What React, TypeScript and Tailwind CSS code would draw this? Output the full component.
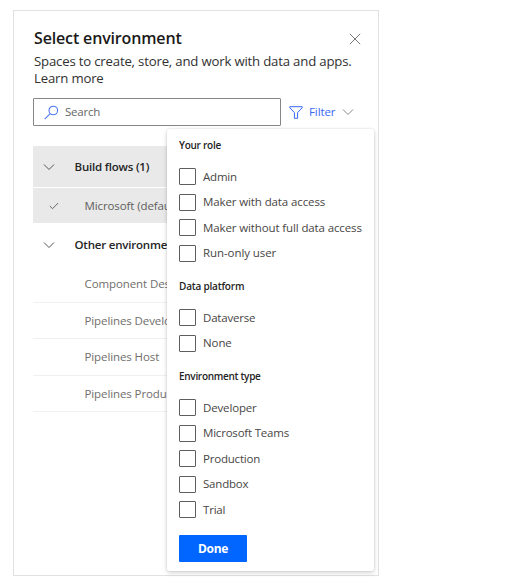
import React from "react";

const groups = [
  {
    title: "Your role",
    titleClass: "tracking-[-0.25px]",
    options: [
      { label: "Admin", cls: "tracking-[-0.2px]" },
      { label: "Maker with data access", cls: "tracking-[-0.11px]" },
      { label: "Maker without full data access", cls: "tracking-[-0.12px]" },
      { label: "Run-only user", cls: "tracking-[-0.08px]" },
    ],
  },
  {
    title: "Data platform",
    titleClass: "tracking-[-0.2px]",
    options: [
      { label: "Dataverse", cls: "tracking-[-0.2px]" },
      { label: "None", cls: "tracking-[-0.1px]" },
    ],
  },
  {
    title: "Environment type",
    titleClass: "tracking-[-0.3px]",
    options: [
      { label: "Developer", cls: "tracking-[-0.15px]" },
      { label: "Microsoft Teams", cls: "tracking-[-0.2px]" },
      { label: "Production", cls: "tracking-[-0.2px]" },
      { label: "Sandbox", cls: "tracking-[-0.2px]" },
      { label: "Trial", cls: "tracking-[-0.2px]" },
    ],
  },
];

const environments = ["Component Design", "Pipelines Development", "Pipelines Host", "Pipelines Production"];

function Chevron({ color = "#555" }: { color?: string }) {
  return (
    <svg width="12" height="8" viewBox="0 0 12 8" fill="none" stroke={color} className="shrink-0">
      <path d="M1 1.5 6 6.5l5-5" />
    </svg>
  );
}

function FilterMenu() {
  return (
    <div className="absolute left-[153px] top-[118px] h-[442px] w-[207px] rounded-[2px] bg-white px-3 pt-[9px] shadow-[0_2px_5px_rgba(0,0,0,0.16),0_0_2px_rgba(0,0,0,0.15)]">
      {groups.map((g) => (
        <section key={g.title} className="mb-[9px] last-of-type:mb-[8.5px]">
          <h2 className={`mb-[16px] h-[14px] whitespace-nowrap text-[10px] leading-[14px] font-semibold text-[#242424] ${g.titleClass}`}>
            {g.title}
          </h2>
          {g.options.map((o) => (
            <label key={o.label} className="flex h-[25.5px] items-start gap-[7px]">
              <span className="h-[17px] w-[17px] shrink-0 rounded-[1px] border border-[#605e5c] bg-white" />
              <span className={`-mt-[0.3px] whitespace-nowrap text-[11.5px] leading-[17px] text-[#484644] ${o.cls}`}>{o.label}</span>
            </label>
          ))}
        </section>
      ))}
      <button className="block h-[27px] w-[68px] rounded-[1px] bg-[#0066ff] text-[12px] leading-[27px] font-bold tracking-[-0.3px] text-white">
        Done
      </button>
    </div>
  );
}

export default function App() {
  return (
    <div className="h-[588px] w-[513px] overflow-hidden bg-white pl-[13px] pt-[10px] font-['Open_Sans','Noto_Sans',sans-serif]">
      <main className="relative h-[566px] w-[366px] border border-[#e1e1e1] pl-[20px]">
        <header className="flex h-[40px] items-start justify-between pr-[17px] pt-[15px]">
          <h1 className="whitespace-nowrap text-[16px] leading-[24px] font-semibold tracking-[-0.15px] text-[#1b1a19]">Select environment</h1>
          <svg width="12" height="12" viewBox="0 0 12 12" fill="none" stroke="#777" className="mt-[7px]">
            <path d="m.8.8 10.4 10.4M11.2.8.8 11.2" />
          </svg>
        </header>
        <p className="mt-[2px] whitespace-nowrap text-[13.2px] leading-[17px] tracking-[-0.19px] text-[#323130]">
          Spaces to create, store, and work with data and apps.
          <br />
          Learn more
        </p>
        <div className="-ml-px mt-[11px] flex items-center">
          <div className="flex h-[28px] w-[248px] items-center rounded-[1px] border border-[#868686] pl-[10px]">
            <svg width="15" height="15" viewBox="0 0 15 15" fill="none" stroke="#4c78f5" strokeWidth="1.1">
              <circle cx="9.3" cy="5.5" r="4.3" />
              <path d="M6.2 8.7.7 14.2" />
            </svg>
            <span className="ml-[6px] text-[11.5px] tracking-[-0.2px] text-[#666]">Search</span>
          </div>
          <svg width="14" height="13" viewBox="0 0 14 13" fill="none" stroke="#3868f4" className="ml-2">
            <path d="M.8.7h12.4v1L8.6 6.6v5.7H5.4V6.6L.8 1.7z" />
          </svg>
          <span className="ml-[6px] w-[27px] whitespace-nowrap text-[11.5px] tracking-[-0.1px] text-[#3868f4]">Filter</span>
          <span className="ml-[6px]"><Chevron color="#888" /></span>
        </div>
        <div className="-ml-px mt-5 w-[300px]">
          <div className="flex h-[41px] items-center bg-[#e9e9e9] pl-[10px] text-[#242424]">
            <Chevron />
            <span className="ml-[19.5px] text-[11.5px] font-semibold tracking-[-0.2px]">Build flows (1)</span>
          </div>
          <div className="mt-px flex h-[35px] items-center bg-[#e9e9e9] pl-[16px]">
            <svg width="10" height="8" viewBox="0 0 10 8" fill="none" stroke="#666"><path d="m.8 4 2.7 2.7L9.2 1" /></svg>
            <span className="ml-[25.5px] text-[11.5px] tracking-[-0.1px] text-[#605e5c]">Microsoft (default)</span>
          </div>
          <div className="flex h-[43px] items-center pl-[10px] text-[#242424]">
            <Chevron />
            <span className="ml-[19.5px] text-[11.5px] font-semibold tracking-[-0.2px]">Other environments (4)</span>
          </div>
          {environments.map((name) => (
            <div key={name} className="flex h-[36.5px] items-center border-b border-[#f0f0f0] pl-[51.5px] text-[11.5px] tracking-[-0.1px] text-[#706e6c]">
              {name}
            </div>
          ))}
        </div>
        <FilterMenu />
      </main>
    </div>
  );
}
